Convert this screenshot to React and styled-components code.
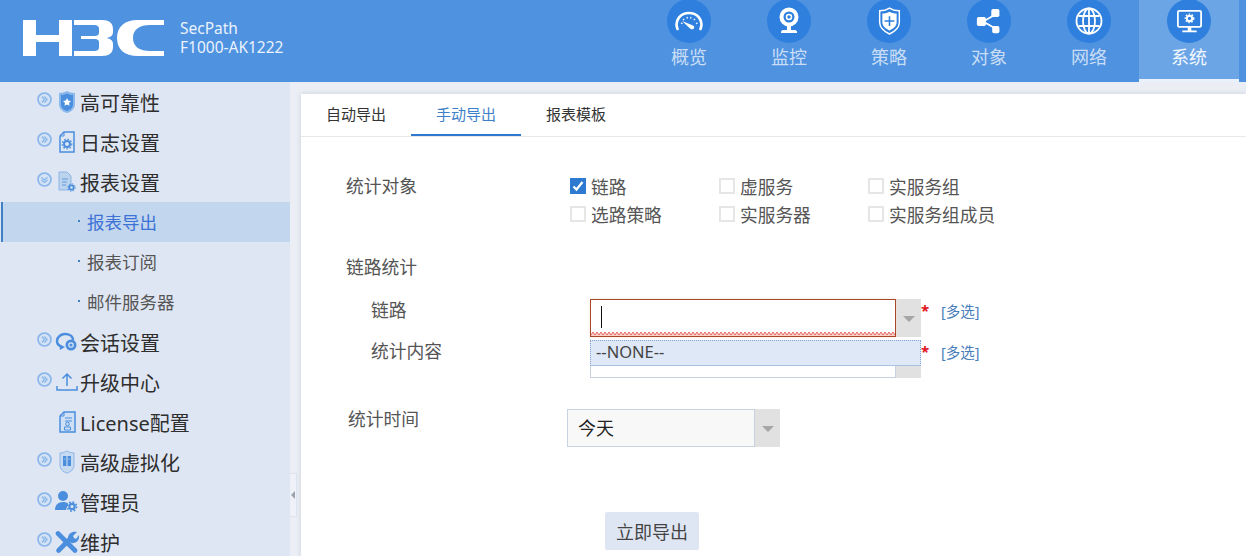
import React from "react";
import styled, { createGlobalStyle } from "styled-components";

const GlobalStyle = createGlobalStyle`
  html, body {
    margin: 0;
    padding: 0;
    height: 100%;
    overflow: hidden;
    background: #ebeef5;
    font-family: "Noto Sans", "Noto Sans CJK SC", sans-serif;
  }
  * { box-sizing: border-box; }
`;

const Page = styled.div`
  display: flex;
  flex-direction: column;
  width: 100%;
  height: 100vh;
  overflow: hidden;
`;

const Header = styled.header`
  display: flex;
  justify-content: space-between;
  flex: 0 0 82px;
  padding-right: 7px;
  background: #4f92e0;
`;

const Brand = styled.div`
  display: flex;
  align-items: flex-start;
  padding: 20px 0 0 23px;
`;

const Model = styled.div`
  margin: -1px 0 0 15px;
  font-size: 15.500px;
  line-height: 19px;
  color: #eaf3fd;
`;

const Nav = styled.nav`
  display: flex;
`;

const NavItem = styled.div`
  display: flex;
  flex-direction: column;
  align-items: center;
  width: 100px;
  height: 82px;
  font-size: 18px;
  line-height: 26px;
  color: ${({ $active }) => ($active ? "#f4f9ff" : "#c9def6")};
  background: ${({ $active }) => ($active ? "#6ca5e6" : "transparent")};
  border-bottom: 3px solid ${({ $active }) => ($active ? "#e9f1fb" : "transparent")};
`;

const NavIcon = styled.span`
  display: flex;
  align-items: center;
  justify-content: center;
  width: 44px;
  height: 44px;
  margin-top: -1px;
  margin-bottom: 1px;
  border-radius: 50%;
  background: #2f80de;
  color: #fff;
`;

const Body = styled.div`
  position: relative;
  display: flex;
  flex: 1;
  min-height: 0;
`;

const Sidebar = styled.aside`
  flex: 0 0 290px;
  overflow: hidden;
  background: #dfe6f3;
`;

const MenuRow = styled.div`
  display: flex;
  align-items: center;
  height: 40px;
  padding-left: 37px;
  font-size: 20px;
  color: #2e2e2e;
`;

const Expander = styled.svg`
  flex: 0 0 15px;
  margin-top: -6px;
`;

const Blank = styled.span`
  flex: 0 0 15px;
`;

const MenuIcon = styled.svg`
  flex: 0 0 24px;
  margin: 0 0 0 3px;
  color: #4a8edd;
`;

const MenuText = styled.span`
  margin: 4px 0 0 1px;
  line-height: 28px;
`;

const SubRow = styled.div`
  display: flex;
  align-items: center;
  height: 40px;
  margin-left: 1px;
  padding-bottom: 2px;
  padding-left: ${({ $active }) => ($active ? 75 : 77)}px;
  font-size: 17.500px;
  color: ${({ $active }) => ($active ? "#3d72d6" : "#555")};
  background: ${({ $active }) => ($active ? "#c2d6ee" : "transparent")};
  border-left: ${({ $active }) => ($active ? "2px solid #3f7fc4" : "0")};
`;

const SubDot = styled.span`
  width: 2px;
  height: 2px;
  margin-right: 7px;
  background: #3f7fc4;
`;

const CollapseHandle = styled.div`
  position: absolute;
  left: 290px;
  top: 391px;
  display: flex;
  align-items: center;
  justify-content: center;
  width: 7px;
  height: 44px;
  background: #eef1f7;
  border: 1px solid #dde3ee;
  border-left: 0;
  &::before {
    content: "";
    border-style: solid;
    border-width: 4px 4px 4px 0;
    border-color: transparent #9aa3ad transparent transparent;
  }
`;

const Main = styled.main`
  flex: 1;
  margin: 12px 0 0 11px;
  background: #fff;
  box-shadow: 0 0 5px rgba(60, 70, 90, 0.18);
  overflow: hidden;
`;

const Tabs = styled.div`
  display: flex;
  height: 43px;
  border-bottom: 1px solid #e6e8ec;
`;

const Tab = styled.div`
  width: 110px;
  height: 42px;
  font-size: 15px;
  line-height: 40px;
  text-align: center;
  color: ${({ $active }) => ($active ? "#3d7fc9" : "#333")};
  border-bottom: 2px solid ${({ $active }) => ($active ? "#2f7ad1" : "transparent")};
`;

const Form = styled.div`
  padding: 35px 0 0 45px;
`;

const ObjectRow = styled.div`
  display: flex;
`;

const Label = styled.div`
  flex: 0 0 ${({ $width }) => $width}px;
  font-size: 17.800px;
  line-height: 28px;
  color: #555;
`;

const CheckGrid = styled.div`
  display: grid;
  grid-template-columns: repeat(3, 149px);
  grid-auto-rows: 28px;
`;

const Check = styled.div`
  display: flex;
  align-items: center;
  font-size: 17.700px;
  color: #555;
`;

const Box = styled.span`
  display: flex;
  align-items: center;
  justify-content: center;
  width: 16px;
  height: 16px;
  margin-right: 5px;
  background: ${({ $on }) => ($on ? "#2f7ad1" : "#fff")};
  border: ${({ $on }) => ($on ? "0" : "2px solid #e6e6e6")};
`;

const Section = styled(Label)`
  margin: 25px 0 18px;
`;

const FieldGroup = styled.div`
  position: relative;
  padding-left: 25px;
`;

const FieldRow = styled.div`
  display: flex;
  align-items: flex-start;
  height: ${({ $height }) => $height}px;
`;

const FieldLabel = styled(Label)`
  margin-top: -3px;
`;

const TimeLabel = styled(Label)`
  margin-top: -4px;
`;

const SelectBox = styled.div`
  display: flex;
  flex: 0 0 ${({ $width }) => $width}px;
  height: 38px;
`;

const InputBox = styled.div`
  position: relative;
  flex: 1;
  padding-left: ${({ $pad }) => $pad || 0}px;
  font-size: 18px;
  line-height: 36px;
  color: #222;
  background: ${({ $bg }) => $bg || "#fff"};
  border: 1px solid ${({ $invalid }) => ($invalid ? "#a8472a" : "#c8d1e0")};
  box-shadow: ${({ $invalid }) => ($invalid ? "0 0 3px #fbe3d2" : "none")};
`;

const Wavy = styled.svg`
  position: absolute;
  left: 0;
  bottom: 0;
  display: block;
`;

const Caret = styled.span`
  position: absolute;
  left: 10px;
  top: 6px;
  width: 1px;
  height: 22px;
  background: #111;
`;

const Arrow = styled.div`
  display: flex;
  align-items: center;
  justify-content: center;
  flex: 0 0 25px;
  background: #e1e1e1;
  &::before {
    content: "";
    margin-top: 2px;
    border-style: solid;
    border-width: 6px 6px 0;
    border-color: #a6a6a6 transparent transparent;
  }
`;

const Required = styled.span`
  width: 20px;
  padding-top: 2px;
  font-size: 15px;
  line-height: 18px;
  font-weight: 700;
  color: #e0101a;
`;

const MultiLink = styled.span`
  font-size: 14.500px;
  line-height: 24px;
  color: #4a7ebb;
`;

const DropOption = styled.div`
  position: absolute;
  left: 244px;
  top: 41px;
  width: 331px;
  height: 26px;
  padding-left: 5px;
  font-size: 16.500px;
  line-height: 21px;
  color: #444;
  background: #dee8f7;
  border: 1px dotted #7fa3d6;
  border-bottom: 1px solid #a9c1e3;
`;

const TimeRow = styled.div`
  display: flex;
  align-items: flex-start;
  margin: 31px 0 0 2px;
  height: 38px;
`;

const Submit = styled.button`
  display: block;
  width: 94px;
  height: 38px;
  margin: 65px 0 0 259px;
  padding: 0;
  font: inherit;
  font-size: 18px;
  color: #444;
  background: #dfe6f3;
  border: 0;
  border-radius: 2px;
`;

const Logo = () => (
  <svg width="142" height="37" viewBox="0 0 142 37">
    <g fill="#fff">
      <path d="M0 0h13v15h23V0h13v36H36V22H13v14H0z" />
      <path d="M51 0h28c7 0 11 3 11 9v3c0 4-3 5-6 6 3 1 6 2 6 6v3c0 6-4 9-11 9H51v-5h20c3 0 5-1 5-4v-5c0-2-2-3-4-3H58v-3h14c2 0 4-1 4-3V9c0-3-2-4-5-4H51z" />
      <path d="M141 0v5h-14c-10 0-17 4-17 13s7 13 17 13h14v5h-26c-14 0-21-7-21-18s7-18 21-18z" />
    </g>
  </svg>
);

const GaugeIcon = () => (
  <svg width="30" height="20" viewBox="0 0 30 20" fill="none" stroke="#fff">
    <path d="M3.500 18C0 9 7 2 15 2s15 7 11.500 16" strokeWidth="2.600" strokeLinecap="round" />
    <path d="M7 12l1.500.7M9 8l1.200 1M13 6l.4 1.500M17 6l-.4 1.500M21 8l-1.200 1M23.500 12l-1.500.7" strokeWidth="1.300" />
    <path d="M8 10l11 4.500c2 1 1.500 4-1 3.800-1 0-1.500-.5-2.500-1.300z" fill="#fff" stroke="none" />
  </svg>
);

const CameraIcon = () => (
  <svg width="24" height="30" viewBox="0 0 24 30" fill="none">
    <circle cx="12" cy="11" r="7.500" stroke="#fff" strokeWidth="4" />
    <circle cx="12" cy="11" r="2.500" stroke="#fff" strokeWidth="1.500" />
    <path d="M10 20h4v4h4c1 0 2 1 2 2v1H4v-1c0-1 1-2 2-2h4z" fill="#fff" />
  </svg>
);

const ShieldIcon = () => (
  <svg width="25" height="29" viewBox="0 0 28 32" fill="none">
    <path d="M3 4c4 0 8-1 11-3 3 2 7 3 11 3v13c0 6-5 10-11 13C8 27 3 23 3 17z" stroke="#fff" strokeWidth="1.600" />
    <path d="M6 7c3 0 6-1 8-2 2 1 5 2 8 2v10c0 4-4 7-8 9-4-2-8-5-8-9z" fill="#fff" />
    <path d="M14 10v11M8.500 15.500h11" stroke="#2f80de" strokeWidth="1.800" />
  </svg>
);

const ShareIcon = () => (
  <svg width="27" height="27" viewBox="0 0 30 30" fill="none">
    <path d="M8 15L22 7M8 15l14 8" stroke="#fff" strokeWidth="2" />
    <rect x="1" y="10" width="10" height="10" rx="2" fill="#fff" />
    <rect x="17" y="1" width="9" height="9" rx="2" fill="#fff" />
    <rect x="18" y="20" width="8" height="8" rx="2" fill="#fff" />
  </svg>
);

const GlobeIcon = () => (
  <svg width="30" height="30" viewBox="0 0 30 30" fill="none" stroke="#fff" strokeWidth="1.800">
    <circle cx="15" cy="15" r="12.500" />
    <ellipse cx="15" cy="15" rx="6" ry="12.500" />
    <path d="M4.500 10h21M4.500 20h21" />
    <path d="M15 2.500v25" />
  </svg>
);

const MonitorIcon = () => (
  <svg width="27" height="25" viewBox="0 0 30 28" fill="none">
    <rect x="2" y="2" width="26" height="18" rx="1.500" stroke="#fff" strokeWidth="2" />
    <circle cx="15" cy="10.500" r="3" stroke="#fff" strokeWidth="2.200" />
    <circle cx="15" cy="10.500" r="4.800" stroke="#fff" strokeWidth="1.400" strokeDasharray="1.800 1.700" />
    <path d="M13 20h4v4h-4zM7 24h16v2H7z" fill="#fff" />
  </svg>
);

const navItems = [
  { label: "概览", icon: <GaugeIcon /> },
  { label: "监控", icon: <CameraIcon /> },
  { label: "策略", icon: <ShieldIcon /> },
  { label: "对象", icon: <ShareIcon /> },
  { label: "网络", icon: <GlobeIcon /> },
  { label: "系统", icon: <MonitorIcon />, active: true },
];

const ExpandMark = ({ open }) => (
  <Expander width="15" height="15" viewBox="0 0 15 15" fill="none" stroke="#86b5ea">
    <circle cx="7.500" cy="7.500" r="6.500" strokeWidth="1.600" fill="#d3e1f4" />
    {open ? (
      <path d="M4.500 5.500l3 2.500 3-2.500M4.500 8l3 2.500 3-2.500" strokeWidth="1.200" />
    ) : (
      <path d="M5 4.500l2.500 3-2.500 3M7.500 4.500l2.500 3-2.500 3" strokeWidth="1.200" />
    )}
  </Expander>
);

const glyphs = {
  shield: (
    <>
      <path d="M4 3c3 0 6-1 8-2 2 1 5 2 8 2v11c0 5-4 8-8 9-4-1-8-4-8-9z" fill="#8ab8ec" />
      <path d="M6 5c2 0 4-.5 6-1.500 2 1 4 1.500 6 1.500v9c0 4-3 6-6 7-3-1-6-3-6-7z" fill="#4a8edd" />
      <path d="M12 8l1.200 2.600 2.800.3-2 2 .5 2.800-2.500-1.300-2.500 1.300.5-2.800-2-2 2.800-.3z" fill="#fff" />
    </>
  ),
  log: (
    <>
      <path d="M9 2h10v20H5V6z" fill="none" stroke="currentColor" strokeWidth="1.500" />
      <path d="M9 2v4H5" fill="none" stroke="currentColor" />
      <circle cx="12" cy="14" r="3" fill="none" stroke="currentColor" strokeWidth="2" />
      <circle cx="12" cy="14" r="4.800" fill="none" stroke="currentColor" strokeWidth="1.200" strokeDasharray="1.600 1.600" />
    </>
  ),
  report: (
    <>
      <path d="M4 2h8l4 4v9h-2v5H4z" fill="#bcd3ee" stroke="#8db6e6" />
      <path d="M7 9h6M7 12h5M7 15h4" stroke="#5f9ae0" />
      <circle cx="16.500" cy="17.500" r="2.200" fill="none" stroke="#4a8edd" strokeWidth="1.800" />
      <circle cx="16.500" cy="17.500" r="3.700" fill="none" stroke="#4a8edd" strokeWidth="1" strokeDasharray="1.400 1.500" />
    </>
  ),
  chat: (
    <>
      <path d="M5 16c-2-1-3-3-3-5 0-4 4-7 8-7s8 2 8 6" fill="none" stroke="currentColor" strokeWidth="2.400" />
      <path d="M4 14l1 6 5-3z" fill="currentColor" />
      <circle cx="16" cy="15" r="5.500" fill="currentColor" />
      <circle cx="16" cy="15" r="2.200" fill="none" stroke="#dfe6f3" strokeWidth="1.200" />
    </>
  ),
  upload: (
    <path d="M12 4v12M7.500 8.500L12 4l4.500 4.500M2 16v4h20v-4" fill="none" stroke="currentColor" strokeWidth="1.500" />
  ),
  license: (
    <>
      <path d="M9 2h11v20H5V6z" fill="#cfe0f4" stroke="currentColor" strokeWidth="1.500" />
      <path d="M9 2v4H5M10 8h7M10 11h7" fill="none" stroke="currentColor" />
      <circle cx="12.500" cy="14" r="1.800" fill="none" stroke="currentColor" />
      <path d="M9.500 20v-3h6v3z" fill="none" stroke="currentColor" />
    </>
  ),
  virtual: (
    <>
      <path d="M5 3c3 0 5-1 7-2 2 1 4 2 7 2v12c0 4-3 7-7 8-4-1-7-4-7-8z" fill="#c6daf2" stroke="#8db6e6" />
      <rect x="8" y="6" width="8" height="10" fill="#4a8edd" />
      <path d="M12 6v10M9.500 9h1M13.500 9h1" stroke="#dfe6f3" />
    </>
  ),
  admin: (
    <>
      <circle cx="8" cy="6" r="5" fill="currentColor" />
      <path d="M0 20c0-5 3-8 8-8 2 0 4 .5 5 1.500l-2 6.500z" fill="currentColor" />
      <circle cx="17" cy="16.500" r="2.700" fill="none" stroke="currentColor" strokeWidth="2.200" />
      <circle cx="17" cy="16.500" r="4.600" fill="none" stroke="currentColor" strokeWidth="1.600" strokeDasharray="1.800 1.800" />
    </>
  ),
  tools: (
    <>
      <path d="M3 3.500l17 17" stroke="currentColor" strokeWidth="4.600" strokeLinecap="round" />
      <path d="M16 8L3.500 20.500" stroke="currentColor" strokeWidth="4.600" strokeLinecap="round" />
      <path d="M13 8c0-4 4-7 9-6l-4 4 1 2 2 1 3-4c1 5-3 9-8 8z" fill="currentColor" />
    </>
  ),
};

const MenuEntry = ({ icon, label, open, plain }) => (
  <MenuRow>
    {plain ? <Blank /> : <ExpandMark open={open} />}
    <MenuIcon width="24" height="24" viewBox="0 0 24 24">
      {glyphs[icon]}
    </MenuIcon>
    <MenuText>{label}</MenuText>
  </MenuRow>
);

const SubEntry = ({ label, active }) => (
  <SubRow $active={active}>
    <SubDot />
    {label}
  </SubRow>
);

const checks = [
  { label: "链路", on: true },
  { label: "虚服务" },
  { label: "实服务组" },
  { label: "选路策略" },
  { label: "实服务器" },
  { label: "实服务组成员" },
];

const wavePath = `M0 4${Array.from({ length: 76 }, (_, i) => `L${i * 4 + 2} 1L${i * 4 + 4} 4`).join("")}`;

export default function App() {
  return (
    <Page>
      <GlobalStyle />
      <Header>
        <Brand>
          <Logo />
          <Model>
            SecPath
            <br />
            F1000-AK1222
          </Model>
        </Brand>
        <Nav>
          {navItems.map((item) => (
            <NavItem key={item.label} $active={item.active}>
              <NavIcon>{item.icon}</NavIcon>
              {item.label}
            </NavItem>
          ))}
        </Nav>
      </Header>
      <Body>
        <Sidebar>
          <MenuEntry icon="shield" label="高可靠性" />
          <MenuEntry icon="log" label="日志设置" />
          <MenuEntry icon="report" label="报表设置" open />
          <SubEntry label="报表导出" active />
          <SubEntry label="报表订阅" />
          <SubEntry label="邮件服务器" />
          <MenuEntry icon="chat" label="会话设置" />
          <MenuEntry icon="upload" label="升级中心" />
          <MenuEntry icon="license" label="License配置" plain />
          <MenuEntry icon="virtual" label="高级虚拟化" />
          <MenuEntry icon="admin" label="管理员" />
          <MenuEntry icon="tools" label="维护" />
        </Sidebar>
        <CollapseHandle />
        <Main>
          <Tabs>
            <Tab>自动导出</Tab>
            <Tab $active>手动导出</Tab>
            <Tab>报表模板</Tab>
          </Tabs>
          <Form>
            <ObjectRow>
              <Label $width={224}>统计对象</Label>
              <CheckGrid>
                {checks.map((check) => (
                  <Check key={check.label}>
                    <Box $on={check.on}>
                      {check.on && (
                        <svg width="12" height="12" viewBox="0 0 12 12" fill="none" stroke="#fff" strokeWidth="2.200">
                          <path d="M1.500 6.500l3 3 6-7.500" />
                        </svg>
                      )}
                    </Box>
                    {check.label}
                  </Check>
                ))}
              </CheckGrid>
            </ObjectRow>
            <Section>链路统计</Section>
            <FieldGroup>
              <FieldRow $height={41}>
                <FieldLabel $width={219}>链路</FieldLabel>
                <SelectBox $width={331}>
                  <InputBox $invalid>
                    <Caret />
                    <Wavy width="304" height="5" viewBox="0 0 304 5">
                      <path d={`${wavePath}V5H0Z`} fill="#f9cfca" />
                      <path d={wavePath} fill="none" stroke="#e8685e" strokeWidth="1" />
                    </Wavy>
                  </InputBox>
                  <Arrow />
                </SelectBox>
                <Required>*</Required>
                <MultiLink>[多选]</MultiLink>
              </FieldRow>
              <FieldRow $height={38}>
                <FieldLabel $width={219}>统计内容</FieldLabel>
                <SelectBox $width={331}>
                  <InputBox />
                  <Arrow />
                </SelectBox>
                <Required>*</Required>
                <MultiLink>[多选]</MultiLink>
              </FieldRow>
              <DropOption>--NONE--</DropOption>
            </FieldGroup>
            <TimeRow>
              <TimeLabel $width={219}>统计时间</TimeLabel>
              <SelectBox $width={213}>
                <InputBox $pad={10} $bg="#f8f8f8">今天</InputBox>
                <Arrow />
              </SelectBox>
            </TimeRow>
            <Submit>立即导出</Submit>
          </Form>
        </Main>
      </Body>
    </Page>
  );
}
